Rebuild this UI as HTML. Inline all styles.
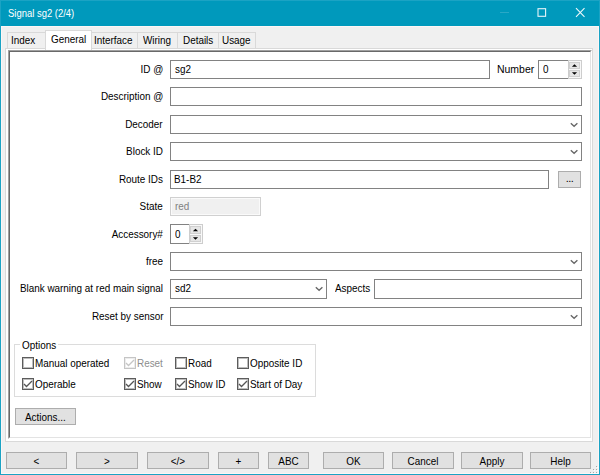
<!DOCTYPE html>
<html><head><meta charset="utf-8">
<style>
*{box-sizing:border-box;margin:0;padding:0}
html,body{width:600px;height:475px;overflow:hidden;background:#f0f0f0;font-family:"Liberation Sans",sans-serif;font-size:11px;color:#000}
.a{position:absolute}
.t,.tr,.tc{position:absolute;white-space:pre;line-height:14px;height:14px;transform:scaleX(0.9)}
.t{transform-origin:0 0}
.tr{transform-origin:100% 0;text-align:right}
.tc{transform-origin:50% 0;text-align:center}
</style></head><body>
<div class="a" style="left:0px;top:0px;width:600px;height:475px;border:1px solid #1ba3c4"></div>
<div class="a" style="left:1px;top:1px;width:598px;height:25px;background:#0099bc"></div>
<div class="a" style="left:1px;top:26px;width:598px;height:448px;border:1px solid #fcf6f6"></div>
<div class="t" style="left:8px;top:6px;color:#fff;transform:scaleX(0.86)">Signal sg2 (2/4)</div>
<div class="a" style="left:500px;top:12px;width:9px;height:1px;background:#2aa8c6"></div>
<svg class="a" style="left:536px;top:7px" width="12" height="12" viewBox="0 0 12 12"><rect x="2" y="1.7" width="7.6" height="7.6" fill="none" stroke="#e6f5f9" stroke-width="1.1"/></svg>
<svg class="a" style="left:575px;top:7px" width="11" height="11" viewBox="0 0 11 11"><path d="M1 1.2L9.5 9.8M9.5 1.2L1 9.8" stroke="#eef8fb" stroke-width="1.1"/></svg>
<div class="a" style="left:7px;top:32px;width:39px;height:17px;background:#f0f0f0;border:1px solid #d9d9d9;border-bottom:none"></div>
<div class="a" style="left:91px;top:32px;width:47px;height:17px;background:#f0f0f0;border:1px solid #d9d9d9;border-bottom:none"></div>
<div class="a" style="left:137px;top:32px;width:41px;height:17px;background:#f0f0f0;border:1px solid #d9d9d9;border-bottom:none"></div>
<div class="a" style="left:177px;top:32px;width:42px;height:17px;background:#f0f0f0;border:1px solid #d9d9d9;border-bottom:none"></div>
<div class="a" style="left:218px;top:32px;width:38px;height:17px;background:#f0f0f0;border:1px solid #d9d9d9;border-bottom:none"></div>
<div class="a" style="left:5px;top:48px;width:588px;height:394px;background:#fff;border:1px solid #d9d9d9"></div>
<div class="a" style="left:45px;top:30px;width:47px;height:20px;background:#fff;border:1px solid #d9d9d9;border-bottom:none"></div>
<div class="t" style="left:11px;top:33px">Index</div>
<div class="t" style="left:51px;top:32px">General</div>
<div class="t" style="left:94px;top:33px">Interface</div>
<div class="t" style="left:143px;top:33px">Wiring</div>
<div class="t" style="left:183px;top:33px">Details</div>
<div class="t" style="left:222px;top:33px">Usage</div>
<div class="a" style="left:8px;top:50px;width:584px;height:389px;border-top:1px solid #a0a0a0;border-left:1px solid #a0a0a0;border-right:1px solid #fff;border-bottom:1px solid #fff"></div>
<div class="a" style="left:9px;top:51px;width:582px;height:387px;background:#fff;border-top:1px solid #696969;border-left:1px solid #696969;border-right:1px solid #e3e3e3;border-bottom:1px solid #e3e3e3"></div>
<div class="tr" style="right:437px;top:62px">ID @</div>
<div class="tr" style="right:437px;top:89px">Description @</div>
<div class="tr" style="right:437px;top:117px">Decoder</div>
<div class="tr" style="right:437px;top:144px">Block ID</div>
<div class="tr" style="right:437px;top:172px">Route IDs</div>
<div class="tr" style="right:437px;top:199px">State</div>
<div class="tr" style="right:437px;top:227px">Accessory#</div>
<div class="tr" style="right:437px;top:254px">free</div>
<div class="tr" style="right:437px;top:281px">Blank warning at red main signal</div>
<div class="tr" style="right:437px;top:309px">Reset by sensor</div>
<div class="a" style="left:170px;top:60px;width:320px;height:19px;background:#fff;border:1px solid #828282"></div>
<div class="t" style="left:175px;top:62px">sg2</div>
<div class="t" style="left:497px;top:62px;transform:scaleX(0.95)">Number</div>
<div class="a" style="left:538px;top:60px;width:44px;height:19px;background:#fff;border:1px solid #828282"></div>
<div class="t" style="left:543px;top:62px">0</div>
<div class="a" style="left:568px;top:60px;width:14px;height:19px;background:#f8f8f8;border:1px solid #cdcdcd"></div>
<div class="a" style="left:569px;top:62px;width:11px;height:7px;background:#e6e6e6;border:1px solid #d0d0d0"></div>
<div class="a" style="left:569px;top:70px;width:11px;height:7px;background:#e6e6e6;border:1px solid #d0d0d0"></div>
<svg class="a" style="left:568px;top:60px" width="14" height="19" viewBox="0 0 14 19"><path d="M3.9 6.8L6.5 4.2L9.1 6.8Z" fill="#000"/><path d="M3.9 12.2L6.5 14.8L9.1 12.2Z" fill="#000"/></svg>
<div class="a" style="left:170px;top:87px;width:412px;height:19px;background:#fff;border:1px solid #828282"></div>
<div class="a" style="left:170px;top:115px;width:412px;height:19px;background:#fff;border:1px solid #828282"></div>
<svg class="a" style="left:569px;top:121px" width="11" height="7" viewBox="0 0 11 7"><path d="M1.8 2.2L5.1 5.3L8.4 2.2" fill="none" stroke="#666" stroke-width="1.3"/></svg>
<div class="a" style="left:170px;top:142px;width:412px;height:19px;background:#fff;border:1px solid #828282"></div>
<svg class="a" style="left:569px;top:148px" width="11" height="7" viewBox="0 0 11 7"><path d="M1.8 2.2L5.1 5.3L8.4 2.2" fill="none" stroke="#666" stroke-width="1.3"/></svg>
<div class="a" style="left:170px;top:170px;width:379px;height:19px;background:#fff;border:1px solid #828282"></div>
<div class="t" style="left:174px;top:172px">B1-B2</div>
<div class="a" style="left:558px;top:171px;width:23px;height:17px;background:#e1e1e1;border:1px solid #adadad"></div>
<div class="a" style="left:558px;top:172px;width:23px;text-align:center;line-height:12px;font-size:11px;letter-spacing:-0.5px">...</div>
<div class="a" style="left:170px;top:197px;width:91px;height:19px;background:#f0f0f0;border:1px solid #d0d0d0;box-shadow:inset 0 0 0 1px #fafafa"></div>
<div class="t" style="left:175px;top:199px;color:#808080">red</div>
<div class="a" style="left:170px;top:224px;width:33px;height:20px;background:#fff;border:1px solid #828282"></div>
<div class="t" style="left:175px;top:227px">0</div>
<div class="a" style="left:189px;top:224px;width:14px;height:20px;background:#f8f8f8;border:1px solid #cdcdcd"></div>
<div class="a" style="left:190px;top:226px;width:11px;height:8px;background:#e6e6e6;border:1px solid #d0d0d0"></div>
<div class="a" style="left:190px;top:235px;width:11px;height:7px;background:#e6e6e6;border:1px solid #d0d0d0"></div>
<svg class="a" style="left:189px;top:224px" width="14" height="20" viewBox="0 0 14 20"><path d="M3.9 7.3L6.5 4.7L9.1 7.3Z" fill="#000"/><path d="M3.9 13.2L6.5 15.8L9.1 13.2Z" fill="#000"/></svg>
<div class="a" style="left:170px;top:252px;width:412px;height:19px;background:#fff;border:1px solid #828282"></div>
<svg class="a" style="left:569px;top:258px" width="11" height="7" viewBox="0 0 11 7"><path d="M1.8 2.2L5.1 5.3L8.4 2.2" fill="none" stroke="#666" stroke-width="1.3"/></svg>
<div class="a" style="left:170px;top:279px;width:157px;height:20px;background:#fff;border:1px solid #828282"></div>
<div class="t" style="left:175px;top:281px">sd2</div>
<svg class="a" style="left:314px;top:285px" width="11" height="7" viewBox="0 0 11 7"><path d="M1.8 2.2L5.1 5.3L8.4 2.2" fill="none" stroke="#666" stroke-width="1.3"/></svg>
<div class="t" style="left:335px;top:281px">Aspects</div>
<div class="a" style="left:374px;top:279px;width:208px;height:20px;background:#fff;border:1px solid #828282"></div>
<div class="a" style="left:170px;top:307px;width:412px;height:19px;background:#fff;border:1px solid #828282"></div>
<svg class="a" style="left:569px;top:313px" width="11" height="7" viewBox="0 0 11 7"><path d="M1.8 2.2L5.1 5.3L8.4 2.2" fill="none" stroke="#666" stroke-width="1.3"/></svg>
<div class="a" style="left:14px;top:344px;width:302px;height:53px;border:1px solid #dcdcdc"></div>
<div class="a" style="left:20px;top:337px;width:38px;height:14px;background:#fff"></div>
<div class="t" style="left:22px;top:338px">Options</div>
<div class="a" style="left:22px;top:357px;width:12px;height:12px;background:#fff;border:1px solid #5c5c5c;box-shadow:inset 0 0 0 1px #bdbdbd"></div>
<div class="t" style="left:35px;top:356px">Manual operated</div>
<div class="a" style="left:124px;top:357px;width:12px;height:12px;background:#fff;border:1px solid #c5c5c5;box-shadow:inset 0 0 0 1px #ececec"></div>
<svg class="a" style="left:124px;top:358px" width="11" height="11" viewBox="0 0 11 11"><path d="M2 5L4.5 7.5L10 2" fill="none" stroke="#c5c5c5" stroke-width="1.3"/></svg>
<div class="t" style="left:137px;top:356px;color:#8d8d8d">Reset</div>
<div class="a" style="left:175px;top:357px;width:12px;height:12px;background:#fff;border:1px solid #5c5c5c;box-shadow:inset 0 0 0 1px #bdbdbd"></div>
<div class="t" style="left:188px;top:356px">Road</div>
<div class="a" style="left:237px;top:357px;width:12px;height:12px;background:#fff;border:1px solid #5c5c5c;box-shadow:inset 0 0 0 1px #bdbdbd"></div>
<div class="t" style="left:250px;top:356px">Opposite ID</div>
<div class="a" style="left:22px;top:378px;width:12px;height:12px;background:#fff;border:1px solid #5c5c5c;box-shadow:inset 0 0 0 1px #bdbdbd"></div>
<svg class="a" style="left:22px;top:379px" width="11" height="11" viewBox="0 0 11 11"><path d="M2 5L4.5 7.5L10 2" fill="none" stroke="#555" stroke-width="1.3"/></svg>
<div class="t" style="left:35px;top:377px">Operable</div>
<div class="a" style="left:124px;top:378px;width:12px;height:12px;background:#fff;border:1px solid #5c5c5c;box-shadow:inset 0 0 0 1px #bdbdbd"></div>
<svg class="a" style="left:124px;top:379px" width="11" height="11" viewBox="0 0 11 11"><path d="M2 5L4.5 7.5L10 2" fill="none" stroke="#555" stroke-width="1.3"/></svg>
<div class="t" style="left:137px;top:377px">Show</div>
<div class="a" style="left:175px;top:378px;width:12px;height:12px;background:#fff;border:1px solid #5c5c5c;box-shadow:inset 0 0 0 1px #bdbdbd"></div>
<svg class="a" style="left:175px;top:379px" width="11" height="11" viewBox="0 0 11 11"><path d="M2 5L4.5 7.5L10 2" fill="none" stroke="#555" stroke-width="1.3"/></svg>
<div class="t" style="left:188px;top:377px">Show ID</div>
<div class="a" style="left:237px;top:378px;width:12px;height:12px;background:#fff;border:1px solid #5c5c5c;box-shadow:inset 0 0 0 1px #bdbdbd"></div>
<svg class="a" style="left:237px;top:379px" width="11" height="11" viewBox="0 0 11 11"><path d="M2 5L4.5 7.5L10 2" fill="none" stroke="#555" stroke-width="1.3"/></svg>
<div class="t" style="left:250px;top:377px">Start of Day</div>
<div class="a" style="left:15px;top:408px;width:61px;height:17px;background:#e1e1e1;border:1px solid #adadad"></div>
<div class="t" style="left:25px;top:410px">Actions...</div>
<div class="a" style="left:6px;top:452px;width:61px;height:17px;background:#e1e1e1;border:1px solid #adadad"></div>
<div class="tc" style="left:6px;width:61px;top:454px">&lt;</div>
<div class="a" style="left:76px;top:452px;width:62px;height:17px;background:#e1e1e1;border:1px solid #adadad"></div>
<div class="tc" style="left:76px;width:62px;top:454px">&gt;</div>
<div class="a" style="left:147px;top:452px;width:62px;height:17px;background:#e1e1e1;border:1px solid #adadad"></div>
<div class="tc" style="left:147px;width:62px;top:454px">&lt;/&gt;</div>
<div class="a" style="left:218px;top:452px;width:41px;height:17px;background:#e1e1e1;border:1px solid #adadad"></div>
<div class="tc" style="left:218px;width:41px;top:454px">+</div>
<div class="a" style="left:268px;top:452px;width:41px;height:17px;background:#e1e1e1;border:1px solid #adadad"></div>
<div class="tc" style="left:268px;width:41px;top:454px">ABC</div>
<div class="a" style="left:323px;top:452px;width:61px;height:17px;background:#e1e1e1;border:1px solid #adadad"></div>
<div class="tc" style="left:323px;width:61px;top:454px">OK</div>
<div class="a" style="left:392px;top:452px;width:62px;height:17px;background:#e1e1e1;border:1px solid #adadad"></div>
<div class="tc" style="left:392px;width:62px;top:454px">Cancel</div>
<div class="a" style="left:461px;top:452px;width:62px;height:17px;background:#e1e1e1;border:1px solid #adadad"></div>
<div class="tc" style="left:461px;width:62px;top:454px">Apply</div>
<div class="a" style="left:530px;top:452px;width:61px;height:17px;background:#e1e1e1;border:1px solid #adadad"></div>
<div class="tc" style="left:530px;width:61px;top:454px">Help</div>
<div class="a" style="left:596px;top:466px;width:1px;height:1px;background:#a8a8a8"></div>
<div class="a" style="left:597px;top:467px;width:1px;height:1px;background:#ffffff"></div>
<div class="a" style="left:593px;top:469px;width:1px;height:1px;background:#a8a8a8"></div>
<div class="a" style="left:594px;top:470px;width:1px;height:1px;background:#ffffff"></div>
<div class="a" style="left:596px;top:469px;width:1px;height:1px;background:#a8a8a8"></div>
<div class="a" style="left:597px;top:470px;width:1px;height:1px;background:#ffffff"></div>
<div class="a" style="left:590px;top:472px;width:1px;height:1px;background:#a8a8a8"></div>
<div class="a" style="left:591px;top:473px;width:1px;height:1px;background:#ffffff"></div>
<div class="a" style="left:593px;top:472px;width:1px;height:1px;background:#a8a8a8"></div>
<div class="a" style="left:594px;top:473px;width:1px;height:1px;background:#ffffff"></div>
<div class="a" style="left:596px;top:472px;width:1px;height:1px;background:#a8a8a8"></div>
<div class="a" style="left:597px;top:473px;width:1px;height:1px;background:#ffffff"></div>
</body></html>
